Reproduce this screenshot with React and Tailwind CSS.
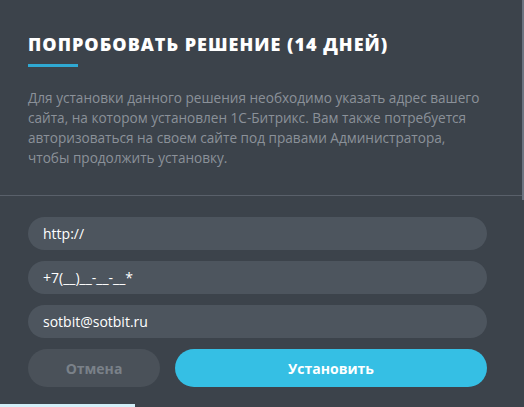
import React from 'react';

const Field = ({ value }) => (
  <div className="h-[33px] rounded-full bg-[#4d555e] flex items-center pl-[15px] text-[14px] text-white">
    {value}
  </div>
);

export default function App() {
  return (
    <div className="relative w-[524px] h-[407px] bg-[#3c434b] overflow-hidden font-['Open_Sans',sans-serif]">
      {/* Header */}
      <div className="px-[28px] pt-[35px] pb-[27px]">
        <h2 className="text-[18px] leading-none font-black tracking-[1px] text-white">
          ПОПРОБОВАТЬ РЕШЕНИЕ (14 ДНЕЙ)
        </h2>
        <div className="mt-[11px] w-[50px] h-[3px] bg-[#2fa9d3]" />
        <p className="mt-[21px] max-w-[460px] text-[13.6px] leading-[20px] text-[#8b9199]">
          Для установки данного решения необходимо указать адрес вашего сайта, на котором установлен 1С-Битрикс. Вам также потребуется авторизоваться на своем сайте под правами Администратора, чтобы продолжить установку.
        </p>
      </div>

      {/* Divider */}
      <div className="h-px bg-[#59606a]" />

      {/* Form */}
      <div className="px-[28px] pt-[21px] flex flex-col gap-[11px] w-[515px]">
        <Field value="http://" />
        <Field value="+7(__)__-__-__*" />
        <Field value="sotbit@sotbit.ru" />
        <div className="flex gap-[15px]">
          <button className="w-[132px] h-[38px] rounded-full bg-[#4a5159] text-[#7a8189] text-[14px] font-bold">
            Отмена
          </button>
          <button className="flex-1 h-[38px] rounded-full bg-[#35bfe4] text-white text-[14px] font-bold">
            Установить
          </button>
        </div>
      </div>

      {/* right edge strip */}
      <div className="absolute right-0 top-0 w-[2px] h-[200px] bg-[#6b7480]" />
      {/* bottom strip from underlying page */}
      <div className="absolute left-0 bottom-0 w-[135px] h-[3px] bg-[#d3f0f9]" />
    </div>
  );
}
